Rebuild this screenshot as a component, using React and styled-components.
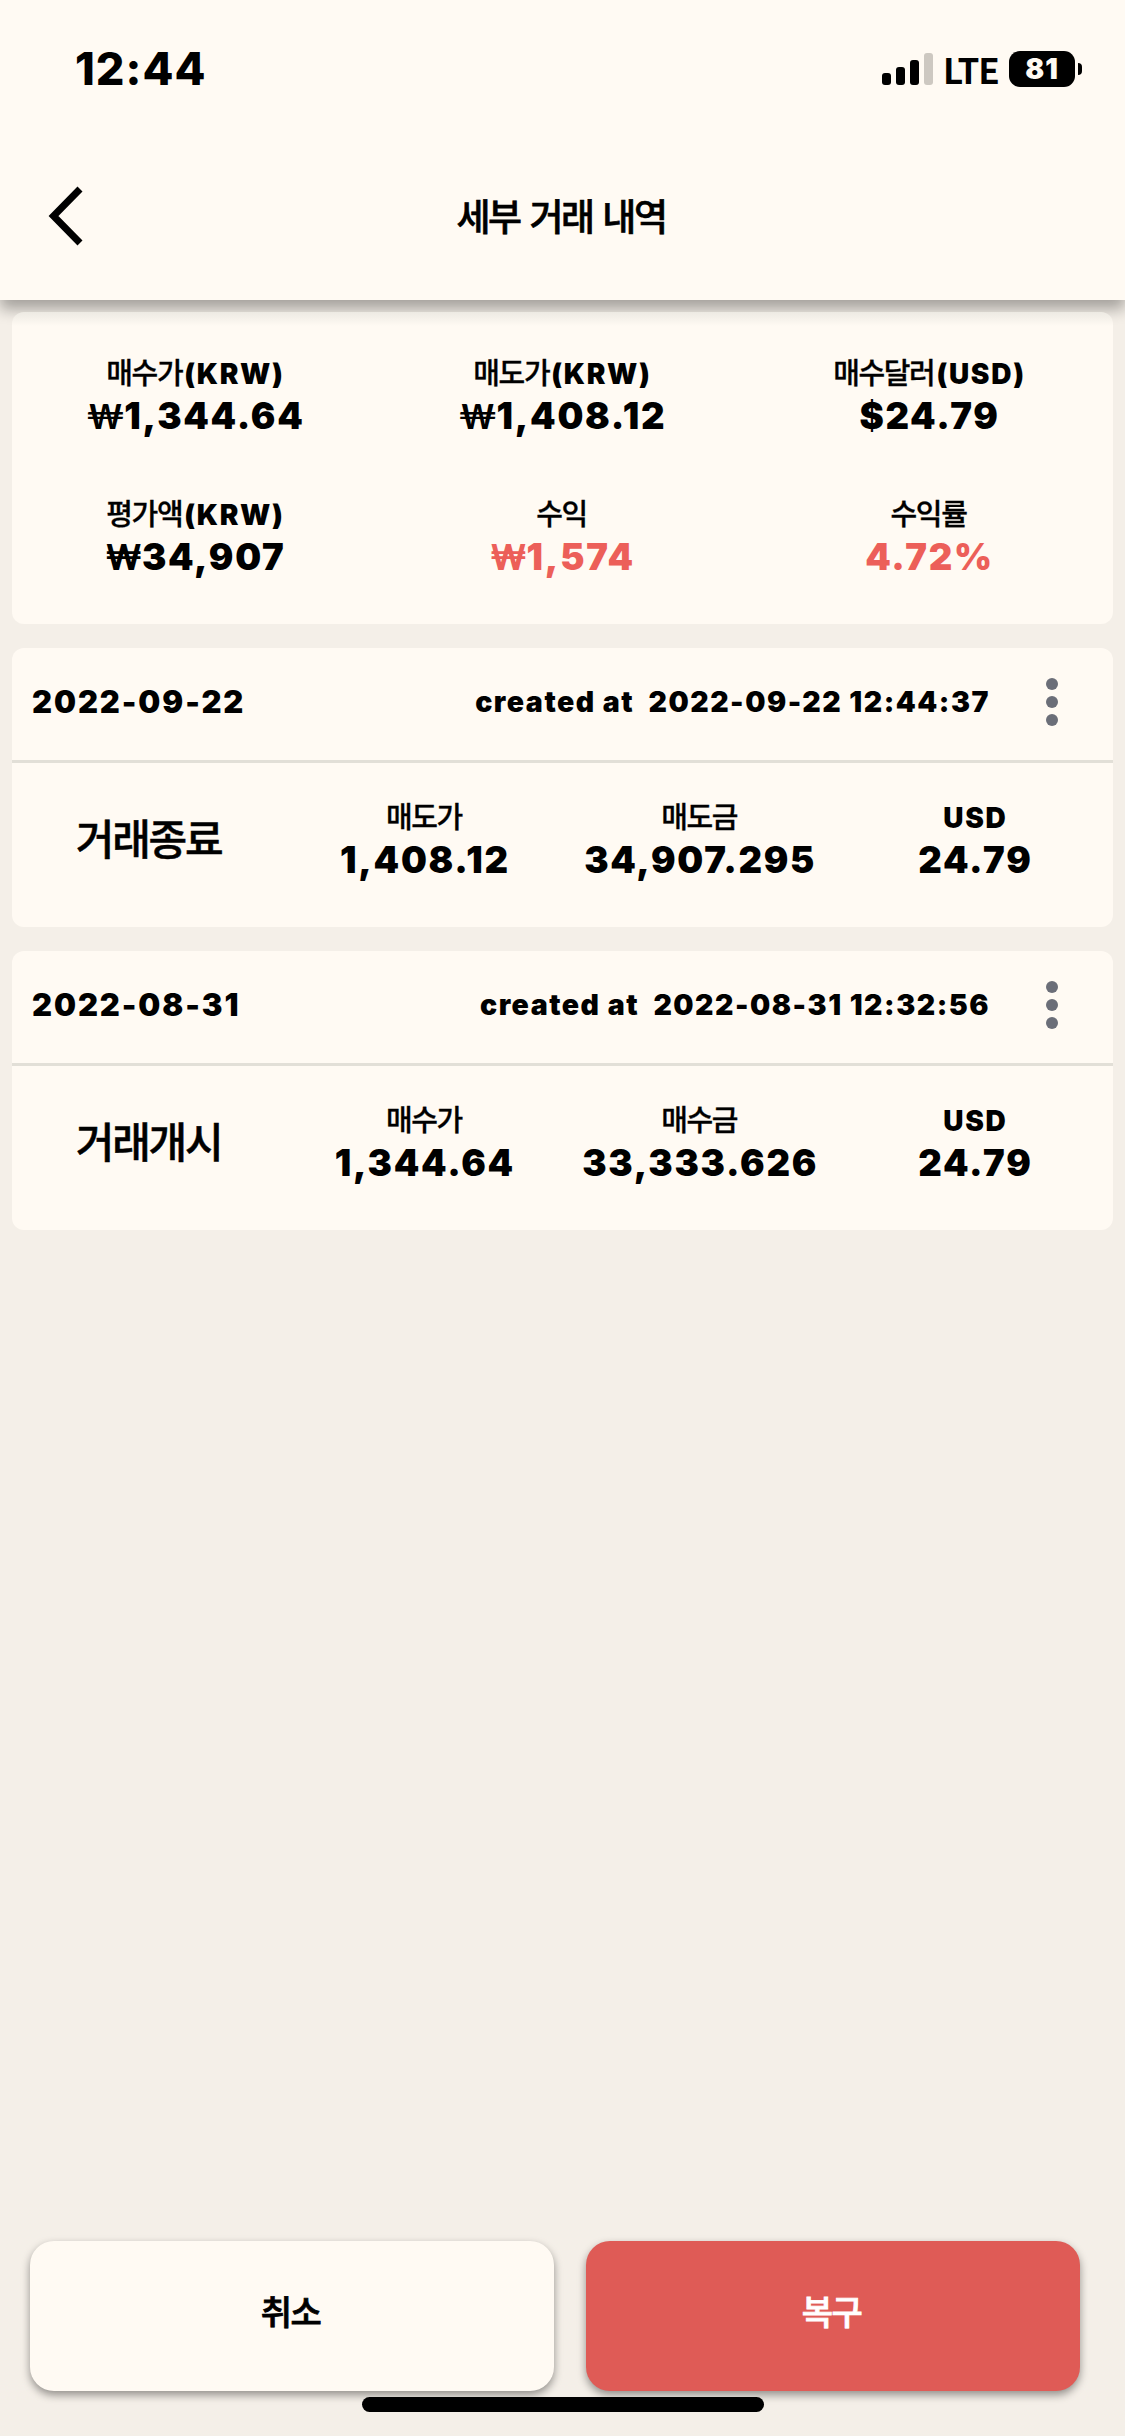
import styled, { createGlobalStyle } from 'styled-components';

const summary = [
  { label: '매수가', unit: '(KRW)', sign: '₩', value: '1,344.64', slim: true },
  { label: '매도가', unit: '(KRW)', sign: '₩', value: '1,408.12', slim: true },
  { label: '매수달러', unit: '(USD)', value: '$24.79' },
  { label: '평가액', unit: '(KRW)', sign: '₩', value: '34,907' },
  { label: '수익', sign: '₩', value: '1,574', profit: true },
  { label: '수익률', value: '4.72%', profit: true },
];

const records = [
  {
    date: '2022-09-22',
    createdAt: '2022-09-22 12:44:37',
    type: '거래종료',
    items: [
      { label: '매도가', value: '1,408.12' },
      { label: '매도금', value: '34,907.295' },
      { unit: 'USD', value: '24.79' },
    ],
  },
  {
    date: '2022-08-31',
    createdAt: '2022-08-31 12:32:56',
    type: '거래개시',
    items: [
      { label: '매수가', value: '1,344.64' },
      { label: '매수금', value: '33,333.626' },
      { unit: 'USD', value: '24.79' },
    ],
  },
];

export default function App() {
  return (
    <Screen>
      <GlobalStyle />
      <Header>
        <StatusBar>
          <Time>12:44</Time>
          <StatusIcons>
            <Signal>
              <SignalBar $height={12} />
              <SignalBar $height={18} />
              <SignalBar $height={25} />
              <SignalBar $height={32} $off />
            </Signal>
            <Network>LTE</Network>
            <Battery>81</Battery>
            <BatteryCap />
          </StatusIcons>
        </StatusBar>
        <NavBar>
          <BackButton>
            <svg width="40" height="62" viewBox="0 0 40 62" fill="none">
              <path d="M35 4L8.5 31L35 58" stroke="#000000" strokeWidth="7" />
            </svg>
          </BackButton>
          <Title>세부 거래 내역</Title>
        </NavBar>
      </Header>

      <Content>
        <SummaryCard>
          {summary.map((item) => (
            <Figure key={item.label} {...item} />
          ))}
        </SummaryCard>
        {records.map((record) => (
          <Record key={record.date} {...record} />
        ))}
      </Content>

      <Footer>
        <CancelButton>취소</CancelButton>
        <RestoreButton>복구</RestoreButton>
      </Footer>
      <HomeBar />
    </Screen>
  );
}

function Figure({ label, unit, sign, slim, value, profit }) {
  return (
    <FigureWrapper>
      <Label>
        {label && <Hangul>{label}</Hangul>}
        {unit}
      </Label>
      <Value $profit={profit}>
        {sign && <Sign $slim={slim}>{sign}</Sign>}
        {value}
      </Value>
    </FigureWrapper>
  );
}

function Record({ date, createdAt, type, items }) {
  return (
    <Card>
      <RecordHead>
        <RecordDate>{date}</RecordDate>
        <CreatedAt>{`created at  ${createdAt}`}</CreatedAt>
        <MoreButton>
          <Dot />
          <Dot />
          <Dot />
        </MoreButton>
      </RecordHead>
      <RecordBody>
        <RecordType>{type}</RecordType>
        {items.map((item) => (
          <Figure key={item.label || item.unit} {...item} />
        ))}
      </RecordBody>
    </Card>
  );
}

const GlobalStyle = createGlobalStyle`
  body {
    margin: 0;
    background: #f4efe8;
  }
  * {
    box-sizing: border-box;
  }
`;

const Screen = styled.div`
  display: flex;
  flex-direction: column;
  width: 1125px;
  height: 2436px;
  overflow: hidden;
  background: #f4efe8;
  color: #000000;
  font-family: Inter, 'Noto Sans CJK KR', sans-serif;
  font-weight: 900;
`;

const Header = styled.div`
  flex: none;
  height: 300px;
  background: #fffaf3;
  box-shadow: 0 9px 14px rgba(0, 0, 0, 0.33);
`;

const StatusBar = styled.div`
  display: flex;
  justify-content: space-between;
  align-items: center;
  height: 132px;
  padding: 6px 43px 0 75px;
`;

const Time = styled.div`
  font-size: 45px;
  font-weight: 800;
  line-height: 54px;
  letter-spacing: 1px;
`;

const StatusIcons = styled.div`
  display: flex;
  align-items: center;
`;

const Signal = styled.div`
  display: flex;
  align-items: flex-end;
  gap: 5px;
  height: 32px;
  margin-right: 10px;
`;

const SignalBar = styled.div`
  width: 9px;
  height: ${({ $height }) => $height}px;
  border-radius: 3px;
  background: ${({ $off }) => ($off ? '#cdc8c1' : '#000000')};
`;

const Network = styled.div`
  width: 66px;
  font-family: 'Noto Sans CJK KR', sans-serif;
  font-size: 35px;
  font-weight: 700;
  line-height: 40px;
  letter-spacing: -1px;
`;

const Battery = styled.div`
  width: 66px;
  height: 36px;
  border-radius: 11px;
  background: #000000;
  color: #fffaf3;
  font-size: 28px;
  font-weight: 900;
  line-height: 37px;
  letter-spacing: 1px;
  text-align: center;
`;

const BatteryCap = styled.div`
  width: 4px;
  height: 12px;
  margin-left: 3px;
  border-radius: 0 4px 4px 0;
  background: #000000;
`;

const NavBar = styled.div`
  display: grid;
  grid-template-columns: 120px 1fr 120px;
  align-items: center;
  height: 168px;
`;

const BackButton = styled.div`
  display: flex;
  padding-left: 45px;
`;

const Title = styled.div`
  font-family: 'Noto Sans CJK KR', sans-serif;
  font-size: 37px;
  font-weight: 500;
  line-height: 54px;
  letter-spacing: -2.5px;
  word-spacing: 4px;
  text-align: center;
  padding: 0 3px 2px 0;
  -webkit-text-stroke: 0.6px currentColor;
`;

const Content = styled.div`
  display: flex;
  flex: 1;
  flex-direction: column;
  gap: 24px;
  padding: 12px 12px 0;
`;

const Card = styled.div`
  height: 279px;
  border-radius: 12px;
  background: #fffaf3;
`;

const SummaryCard = styled(Card)`
  display: grid;
  grid-template-columns: repeat(3, 1fr);
  align-content: start;
  row-gap: 56px;
  height: 312px;
  padding-top: 42px;
  background: linear-gradient(#edeae3, #fffaf3 14px);
`;

const FigureWrapper = styled.div`
  display: flex;
  flex-direction: column;
  align-items: center;
`;

const Label = styled.div`
  font-size: 28px;
  line-height: 40px;
  letter-spacing: 1.7px;
`;

const Hangul = styled.span`
  margin-right: 2px;
  font-size: 29px;
  font-weight: 500;
  letter-spacing: -1.4px;
  -webkit-text-stroke: 0.3px currentColor;
`;

const Value = styled.div`
  font-size: 36.5px;
  line-height: 45px;
  letter-spacing: 1.7px;
  color: ${({ $profit }) => ($profit ? '#ec5f59' : '#000000')};
`;

const Sign = styled.span`
  font-family: ${({ $slim }) => ($slim ? 'Lato, sans-serif' : 'inherit')};
  font-size: 35px;
  font-weight: 700;
  line-height: 1;
  letter-spacing: 0;
`;

const RecordHead = styled.div`
  display: flex;
  align-items: center;
  height: 115px;
  padding: 0 55px 5px 20px;
  border-bottom: 3px solid #e2dfd7;
`;

const RecordDate = styled.div`
  font-size: 31px;
  letter-spacing: 1.9px;
`;

const CreatedAt = styled.div`
  margin-left: auto;
  padding-bottom: 1px;
  font-size: 28.5px;
  letter-spacing: 1.5px;
  white-space: pre;
`;

const MoreButton = styled.div`
  display: flex;
  flex-direction: column;
  gap: 6px;
  margin-left: 56px;
`;

const Dot = styled.div`
  width: 12px;
  height: 12px;
  border-radius: 50%;
  background: #6b6e78;
`;

const RecordBody = styled.div`
  display: grid;
  grid-template-columns: repeat(4, 1fr);
  align-items: center;
  padding-top: 35px;
`;

const RecordType = styled.div`
  font-family: 'Noto Sans CJK KR', sans-serif;
  font-size: 42px;
  font-weight: 500;
  line-height: 60px;
  letter-spacing: -2.2px;
  text-align: center;
  padding: 0 2px 8px 0;
  -webkit-text-stroke: 0.5px currentColor;
`;

const Footer = styled.div`
  display: flex;
  flex: none;
  justify-content: space-between;
  padding: 0 45px 0 30px;
`;

const Button = styled.div`
  display: flex;
  align-items: center;
  justify-content: center;
  height: 150px;
  border-radius: 24px;
  box-shadow: 0 4px 9px rgba(0, 0, 0, 0.4);
  font-family: 'Noto Sans CJK KR', sans-serif;
  font-size: 34px;
  font-weight: 500;
  letter-spacing: -1.5px;
  padding: 0 3px 11px 0;
  -webkit-text-stroke: 0.8px currentColor;
`;

const CancelButton = styled(Button)`
  width: 524px;
  background: #fffaf3;
`;

const RestoreButton = styled(Button)`
  width: 494px;
  background: #df5b56;
  color: #ffffff;
`;

const HomeBar = styled.div`
  flex: none;
  width: 402px;
  height: 15px;
  margin: 6px auto 24px;
  border-radius: 8px;
  background: #000000;
`;
